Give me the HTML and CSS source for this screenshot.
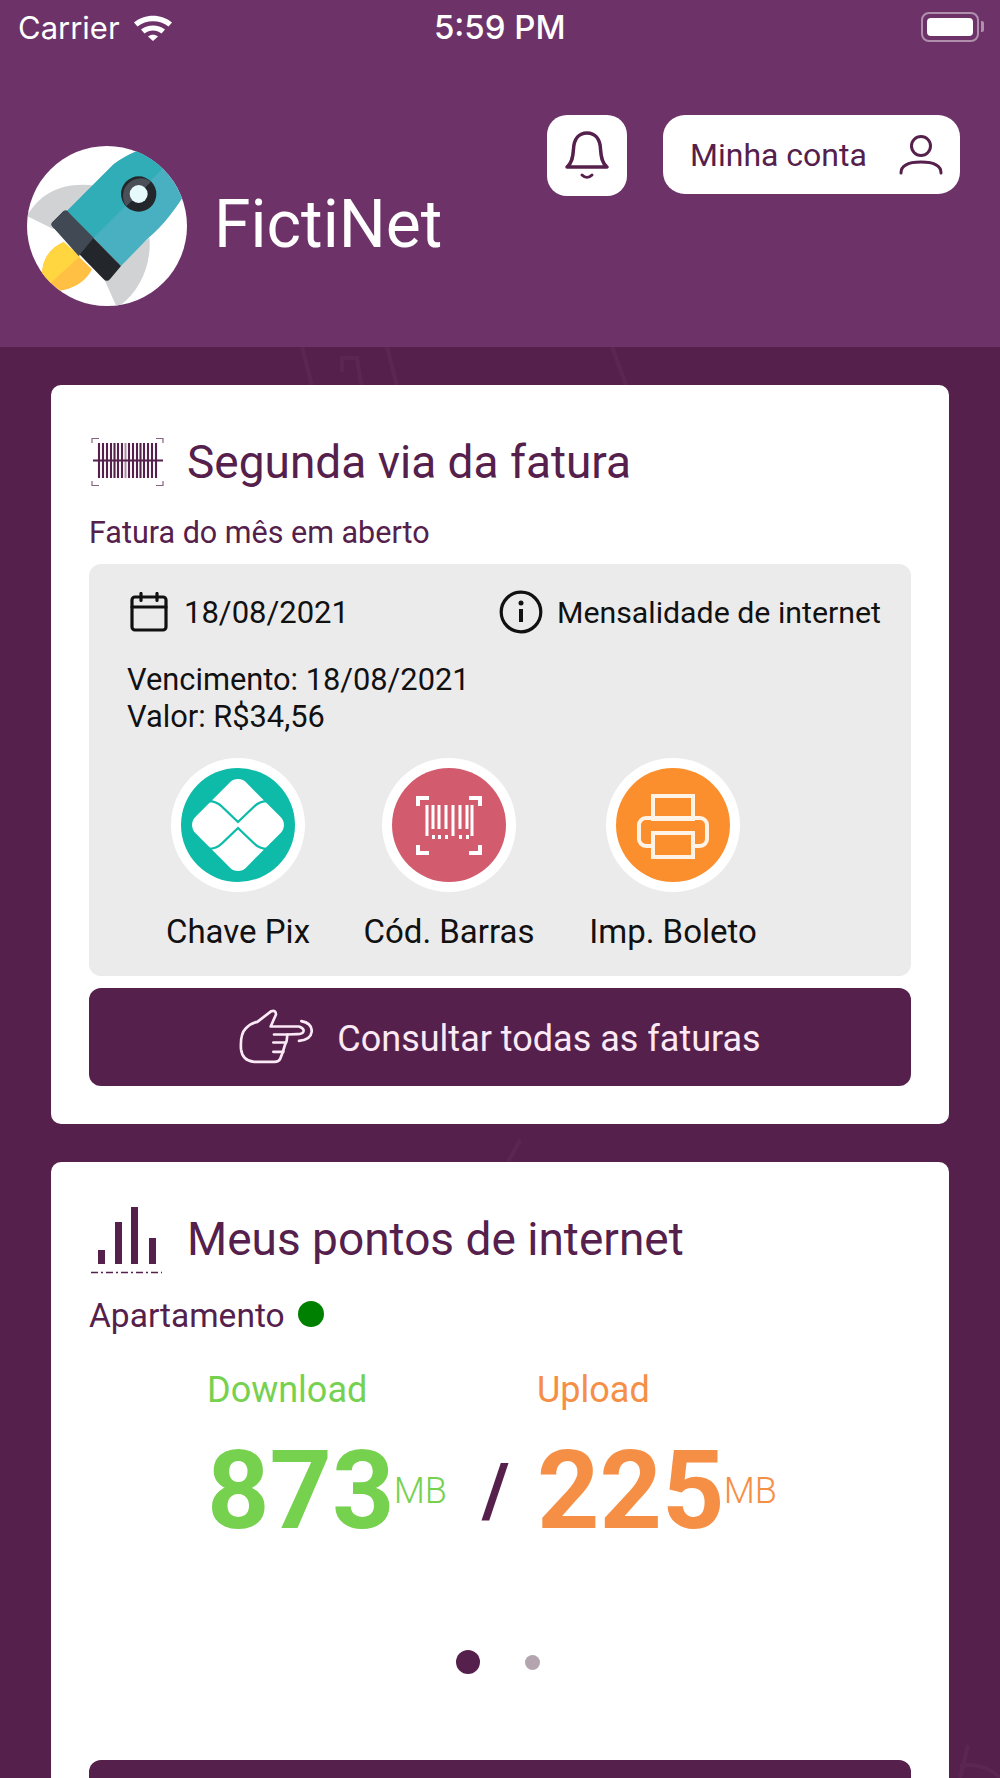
FILE: index.html
```html
<!DOCTYPE html>
<html lang="pt-BR">
<head>
  <meta charset="UTF-8" />
  <meta name="viewport" content="width=device-width, initial-scale=1.0" />
  <title>FictiNet</title>
  <link rel="stylesheet" href="styles.css">
</head>
<body>

<header class="topo">
  <div class="status-bar">
    <div class="status-esq">
      <span>Carrier</span>
      <svg class="wifi" viewBox="0 0 40 28" width="40" height="28">
        <path d="M1 9.500C11.500.5 28.500.5 39 9.500l-3.500 4C27 6.500 13 6.500 4.500 13.500z" fill="#fff"/>
        <path d="M8 16.500C15 11 25 11 32 16.500l-3.500 4C23.500 16.500 16.500 16.500 11.500 20.500z" fill="#fff"/>
        <path d="M15 23.500c3-2.200 7-2.200 10 0L20 28z" fill="#fff"/>
      </svg>
    </div>
    <span class="hora">5:59 PM</span>
    <div class="bateria"><i></i></div>
  </div>

  <div class="topo-linha">
    <div class="marca">
      <svg class="logo" viewBox="80 440 480 480" width="160" height="160">
        <defs><clipPath id="logoClip"><circle cx="320" cy="680" r="240"/></clipPath></defs>
        <circle cx="320" cy="680" r="240" fill="#fff"/>
        <g clip-path="url(#logoClip)">
          <path d="M80 650C120 580 190 545 290 560L160 690z" fill="#d1d2d4"/>
          <path d="M447 715C455 790 420 880 350 925L305 825z" fill="#d1d2d4"/>
          <path d="M190 728C140 750 125 790 125 830L175 875C215 870 255 850 275 810z" fill="#ffc044"/>
          <path d="M190 728C140 750 125 790 125 830L150 852L240 770z" fill="#ffd63f"/>
          <path d="M200 635L340 495C380 465 420 450 450 440L570 560C530 620 500 670 440 720L362 800z" fill="#48b0c0"/>
          <path d="M200 635L340 495C380 465 420 450 450 440L500 495L280 715z" fill="#31adb8"/>
          <path d="M155 680Q150 672 160 665L190 635Q200 630 205 640L362 800L330 838Q320 850 310 840z" fill="#23262b"/>
          <path d="M155 680Q150 672 160 665L190 635Q200 630 205 640L280 715L235 770z" fill="#414a54"/>
          <circle cx="415" cy="584" r="53" fill="#23262b"/>
          <path d="M378 621A53 53 0 0 1 452 547z" fill="#4a4f58"/>
          <circle cx="415" cy="584" r="27" fill="#e6f9fb"/>
        </g>
      </svg>
      <span class="marca-nome">FictiNet</span>
    </div>
    <div class="acoes">
      <div class="btn-sino">
        <svg viewBox="0 0 44 50" width="44" height="50" fill="none" stroke="#55204c" stroke-width="3.500" stroke-linejoin="round" stroke-linecap="round">
          <path d="M2 36c5-4 6-10 6.500-18C9 8 14 2 22 2s13 6 13.500 16C36 26 37 32 42 36z"/>
          <path d="M17 44c3 3 7 3 10 0" stroke-width="3"/>
        </svg>
      </div>
      <div class="btn-conta">
        <span>Minha conta</span>
        <svg viewBox="0 0 44 40" width="44" height="40" fill="none" stroke="#55204c" stroke-width="3" stroke-linecap="round">
          <circle cx="22" cy="11" r="9.500"/>
          <path d="M2 38c0-7 7-11 20-11s20 4 20 11"/>
        </svg>
      </div>
    </div>
  </div>
</header>

<!-- riscos bem fracos do fundo, quase todos escondidos pelos cards -->
<svg class="fundo-riscos" viewBox="0 0 1000 1778" width="1000" height="1778" fill="none" stroke="#fff" stroke-opacity=".035" stroke-width="4">
  <path d="M302 347L313 390M342 372V358H357L362 390M387 347L398 390M612 347L628 390"/>
  <path d="M520 1140L508 1162"/>
  <path d="M960 1766A44 44 0 0 1 1000 1778M968 1745L960 1778"/>
</svg>

<main class="conteudo">

  <section class="card">
    <div class="card-titulo">
      <svg class="titulo-icone" viewBox="0 0 75 50" width="75" height="50" fill="none" stroke="#55204c">
        <path d="M3 6V1.500h7M67 1.500h7V6M3 44v4.500h7M67 48.500h7V44" stroke-width="1.200" opacity=".7"/>
        <path d="M4 23.500h70" stroke-width="2"/>
        <path d="M10 6v35M14 6v35M18 6v35M22 6v35M25.500 6v35M29 6v35M33 6v35M40 6v35M44 6v35M48 6v35M51.500 6v35M55 6v35M59 6v35M63 6v35M67 6v35" stroke-width="2.100"/>
        <path d="M36.500 6v35" stroke-width="2" opacity=".5"/>
      </svg>
      <h2>Segunda via da fatura</h2>
    </div>
    <p class="card-sub">Fatura do mês em aberto</p>

    <div class="fatura">
      <div class="fatura-topo">
        <div class="fatura-data">
          <svg viewBox="0 0 38 40" width="38" height="40" fill="none" stroke="#111" stroke-width="3.200" stroke-linecap="round" stroke-linejoin="round">
            <rect x="2" y="5" width="34" height="33" rx="3"/>
            <path d="M2 15h34M11 1.500v7M27 1.500v7"/>
          </svg>
          <span>18/08/2021</span>
        </div>
        <div class="fatura-tipo">
          <svg viewBox="0 0 44 44" width="44" height="44" fill="none" stroke="#111">
            <circle cx="22" cy="22" r="19.800" stroke-width="3.200"/>
            <path d="M22 19v13" stroke-width="4"/>
            <circle cx="22" cy="13" r="2.500" fill="#111" stroke="none"/>
          </svg>
          <span>Mensalidade de internet</span>
        </div>
      </div>
      <p class="fatura-info">Vencimento: 18/08/2021<br>Valor: R$34,56</p>

      <div class="opcoes">
        <div class="opcao opcao-pix">
          <div class="opcao-anel">
            <svg viewBox="153 83 344 344" width="114" height="114">
              <circle cx="325" cy="255" r="172" fill="#0ebba9"/>
              <rect x="217" y="147" width="216" height="216" rx="34" fill="#fff" transform="rotate(45 325 255)"/>
              <path d="M235 183q25 0 42 17l48 46 48-46q17-17 42-17M235 327q25 0 42-17l48-46 48 46q17 17 42 17" fill="none" stroke="#0ebba9" stroke-width="7"/>
            </svg>
          </div>
          <span>Chave Pix</span>
        </div>
        <div class="opcao opcao-barras">
          <div class="opcao-anel">
            <svg viewBox="0 0 114 114" width="114" height="114">
              <circle cx="57" cy="57" r="57" fill="#d25c6d"/>
              <path d="M37 30H26v8M77 30h11v8M37 85H26v-8M77 85h11v-8" fill="none" stroke="#fff" stroke-width="4"/>
              <path d="M35 37v31M41 37v24M47 37v24M54 37v24M61 37v31M68 37v24M75 37v24M80 37v31" fill="none" stroke="#fff" stroke-width="3"/>
              <path d="M40 69h3M46 69h3M53 69h3M67 69h3M74 69h3" fill="none" stroke="#fff" stroke-width="4"/>
            </svg>
          </div>
          <span>Cód. Barras</span>
        </div>
        <div class="opcao opcao-boleto">
          <div class="opcao-anel">
            <svg viewBox="0 0 114 114" width="114" height="114">
              <circle cx="57" cy="57" r="57" fill="#fb8f2d"/>
              <g fill="none" stroke="#fff3e6" stroke-width="4">
                <rect x="37" y="28" width="40" height="23"/>
                <rect x="23" y="50" width="68" height="28" rx="7"/>
                <rect x="37" y="65" width="40" height="24" fill="#fb8f2d"/>
              </g>
            </svg>
          </div>
          <span>Imp. Boleto</span>
        </div>
      </div>
    </div>

    <div class="btn-roxo">
      <svg viewBox="325 810 222 167" width="74" height="56" fill="none" stroke="#fbeaf6" stroke-width="8" stroke-linejoin="round" stroke-linecap="round">
        <path d="M331 930Q328 885 345 868Q360 852 380 848L422 816Q436 812 436 826L420 862L505 862Q522 868 518 878Q515 885 500 885L470 886L468 905L462 920L456 940L448 960Q444 968 432 968L370 968Q335 965 331 930z"/>
        <path d="M430 886H470M428 910H466M428 938H458M512 846Q545 852 543 878Q540 902 505 905"/>
      </svg>
      <span>Consultar todas as faturas</span>
    </div>
  </section>

  <section class="card">
    <div class="card-titulo card-titulo-pontos">
      <svg class="titulo-icone" viewBox="0 0 75 68" width="75" height="68" fill="#55204c">
        <rect x="9" y="44" width="7" height="14"/>
        <rect x="26" y="16" width="7" height="42"/>
        <rect x="42" y="1" width="7" height="57"/>
        <rect x="60" y="32" width="7" height="26"/>
        <path d="M2 66.500h71" stroke="#55204c" stroke-width="1.600" stroke-dasharray="7 3 2 3"/>
      </svg>
      <h2>Meus pontos de internet</h2>
    </div>
    <div class="ponto-nome">
      <span>Apartamento</span>
      <i class="ponto-status"></i>
    </div>

    <div class="velocidades">
      <div class="vel vel-down">
        <span class="vel-rotulo">Download</span>
        <div class="vel-valor">873<small>MB</small></div>
      </div>
      <span class="vel-barra">/</span>
      <div class="vel vel-up">
        <span class="vel-rotulo">Upload</span>
        <div class="vel-valor">225<small>MB</small></div>
      </div>
    </div>

    <div class="paginacao">
      <i class="pag-ativa"></i>
      <i class="pag-item"></i>
    </div>

    <div class="btn-roxo"></div>
  </section>

</main>

</body>
</html>
```

FILE: styles.css
```css
* {
  box-sizing: border-box;
  margin: 0;
  padding: 0;
}

html, body {
  height: 1778px;
  overflow: hidden;
}

body {
  position: relative;
  background-color: #55204c;
  font-family: Roboto, sans-serif;
  color: #111;
}

.fundo-riscos {
  position: absolute;
  top: 0;
  left: 0;
}

.topo {
  height: 347px;
  background-color: #6d3369;
  color: white;
}

.status-bar {
  display: flex;
  align-items: center;
  justify-content: space-between;
  height: 54px;
  padding: 0 21px 0 18px;
  font-family: Inter, sans-serif;
  font-size: 31px;
  position: relative;
}

.status-esq {
  display: flex;
  align-items: center;
  gap: 13px;
}

.hora {
  font-size: 33px;
  font-weight: 500;
  margin-right: 94px;
}

.bateria {
  position: relative;
  width: 58px;
  height: 30px;
  padding: 4px;
  border: 2px solid rgba(255, 255, 255, 0.45);
  border-radius: 8px;
}

.bateria i {
  display: block;
  height: 100%;
  background-color: white;
  border-radius: 4px;
}

.bateria::after {
  content: "";
  position: absolute;
  right: -7px;
  top: 7px;
  width: 3px;
  height: 11px;
  background-color: rgba(255, 255, 255, 0.45);
  border-radius: 0 2px 2px 0;
}

.topo-linha {
  display: flex;
  justify-content: space-between;
  padding: 61px 40px 0 27px;
}

.marca {
  display: flex;
  align-items: center;
  gap: 27px;
  margin-top: 31px;
}

.logo {
  display: block;
}

.marca-nome {
  font-size: 66px;
  font-weight: 400;
  line-height: 1;
  margin-top: -2px;
}

.acoes {
  display: flex;
  gap: 36px;
  height: 80px;
  color: #55204c;
}

.btn-sino {
  display: flex;
  align-items: center;
  justify-content: center;
  width: 80px;
  height: 81px;
  background-color: white;
  border-radius: 20px;
}

.btn-conta {
  display: flex;
  align-items: center;
  justify-content: space-between;
  width: 297px;
  height: 79px;
  padding: 0 17px 0 27px;
  background-color: white;
  border-radius: 22px;
  font-size: 32px;
}

.conteudo {
  position: relative;
  display: flex;
  flex-direction: column;
  gap: 38px;
  padding: 38px 51px 0;
}

.card {
  padding: 0 38px 38px 38px;
  background-color: white;
  border-radius: 10px;
}

.card-titulo {
  display: flex;
  align-items: center;
  gap: 23px;
  height: 50px;
  margin-top: 52px;
  color: #55204c;
}

.card-titulo h2 {
  font-size: 46px;
  font-weight: 400;
  line-height: 50px;
}

.card-titulo-pontos {
  height: 68px;
  margin-top: 44px;
}

.card-titulo-pontos h2 {
  margin-top: -2px;
}

.card-sub {
  margin: 28px 0 13px;
  font-size: 30.5px;
  line-height: 36px;
  color: #55204c;
}

.fatura {
  height: 412px;
  padding: 27px 30px 0 38px;
  background-color: #ecebec;
  border-radius: 12px;
  font-size: 30.8px;
}

.fatura-topo {
  display: flex;
  justify-content: space-between;
  align-items: center;
  height: 42px;
}

.fatura-data, .fatura-tipo {
  display: flex;
  align-items: center;
}

.fatura-data {
  gap: 16px;
  margin-left: 3px;
  font-size: 31px;
}

.fatura-tipo {
  gap: 14px;
  font-size: 30.3px;
}

.fatura-info {
  margin-top: 28px;
  line-height: 37px;
}

.opcoes {
  display: flex;
  margin-top: 23px;
  font-size: 33px;
}

.opcao {
  display: flex;
  flex-direction: column;
  align-items: center;
  gap: 20px;
  white-space: nowrap;
}

.opcao-pix {
  width: 150px;
  margin-left: 36px;
}

.opcao-barras {
  width: 200px;
  margin-left: 36px;
}

.opcao-boleto {
  width: 180px;
  margin-left: 34px;
}

.opcao-anel {
  width: 134px;
  height: 134px;
  padding: 10px;
  background-color: white;
  border-radius: 50%;
}

.opcao-anel svg {
  display: block;
}

.btn-roxo {
  display: flex;
  align-items: center;
  justify-content: center;
  gap: 24px;
  height: 98px;
  margin-top: 12px;
  background-color: #55204c;
  border-radius: 12px;
  color: #fbeaf6;
  font-size: 36px;
}

.btn-roxo span {
  margin-top: 4px;
}

.ponto-nome {
  display: flex;
  align-items: center;
  gap: 13px;
  margin-top: 22px;
  font-size: 33.5px;
  line-height: 40px;
  color: #55204c;
}

.ponto-status {
  width: 26px;
  height: 26px;
  background-color: #008000;
  border-radius: 50%;
  margin-top: -4px;
}

.velocidades {
  display: flex;
  align-items: flex-start;
  margin-top: 33px;
  padding-left: 118px;
}

.vel {
  display: flex;
  flex-direction: column;
}

.vel-rotulo {
  font-size: 36px;
  line-height: 42px;
}

.vel-valor {
  display: flex;
  align-items: flex-start;
  font-size: 109px;
  font-weight: 700;
  line-height: 110px;
  margin-top: 25px;
}

.vel-valor small {
  font-size: 36px;
  font-weight: 300;
  line-height: 36px;
  margin-top: 37px;
  margin-left: -1px;
}

.vel-down {
  width: 275px;
  color: #76d14f;
}

.vel-up {
  color: #f68f46;
}

.vel-barra {
  width: 55px;
  margin-top: 67px;
  font-size: 74px;
  font-weight: 700;
  line-height: 110px;
  color: #55204c;
}

.paginacao {
  display: flex;
  align-items: center;
  justify-content: center;
  gap: 45px;
  margin-top: 104px;
  padding-right: 4px;
}

.pag-ativa {
  width: 24px;
  height: 24px;
  background-color: #55204c;
  border-radius: 50%;
}

.pag-item {
  width: 15px;
  height: 15px;
  background-color: #b3a4b0;
  border-radius: 50%;
}

.paginacao + .btn-roxo {
  margin-top: 86px;
}
```
